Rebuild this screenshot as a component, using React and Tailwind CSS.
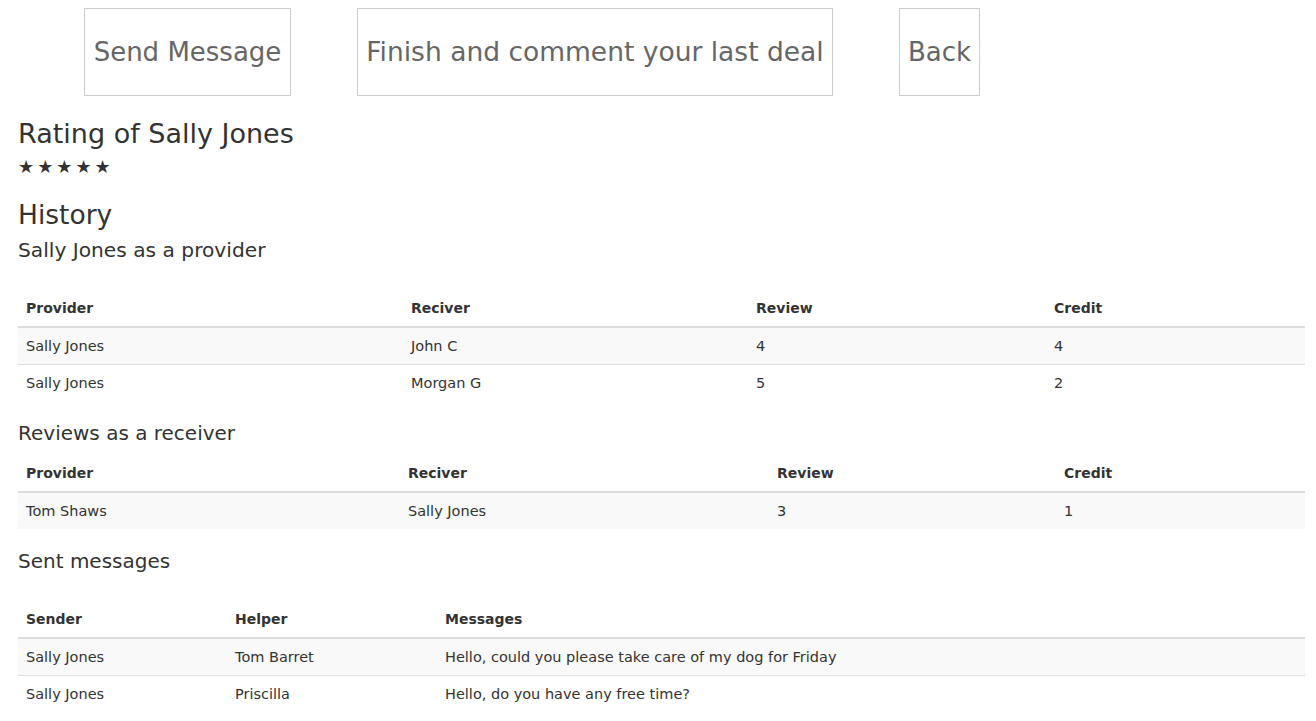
const providerRows = [
  ["Sally Jones", "John C", "4", "4"],
  ["Sally Jones", "Morgan G", "5", "2"],
];

const receiverRows = [["Tom Shaws", "Sally Jones", "3", "1"]];

const messageRows = [
  ["Sally Jones", "Tom Barret", "Hello, could you please take care of my dog for Friday"],
  ["Sally Jones", "Priscilla", "Hello, do you have any free time?"],
];

// bootstrap-ish striped table
const DataTable = ({ heads, widths, rows }) => (
  <table className="w-full table-fixed border-collapse leading-[20px] text-[#333]">
    <thead>
      <tr>
        {heads.map((h, i) => (
          <th
            key={h}
            className={`${widths[i] || ""} h-[37px] border-b-2 border-[#ddd] px-[8px] py-0 text-left text-[14px] font-bold`}
          >
            {h}
          </th>
        ))}
      </tr>
    </thead>
    <tbody>
      {rows.map((row, r) => (
        <tr
          key={r}
          className={`${r % 2 === 0 ? "bg-[#f9f9f9]" : ""} ${r > 0 ? "border-t border-[#ddd]" : ""}`}
        >
          {row.map((cell, c) => (
            <td key={c} className="h-[37px] px-[8px] py-0 text-[14.5px]">
              {cell}
            </td>
          ))}
        </tr>
      ))}
    </tbody>
  </table>
);

export default function App() {
  return (
    <div
      className="min-h-screen bg-white text-[#333]"
      style={{ fontFamily: '"DejaVu Sans", Verdana, sans-serif' }}
    >
      {/* action buttons */}
      <div className="flex gap-[66px] pl-[84px] pt-[8px]">
        <button className="flex h-[88px] w-[207px] items-center justify-center border border-[#ccc] bg-white text-[26px] text-[#666]">
          Send Message
        </button>
        <button className="flex h-[88px] w-[476px] items-center justify-center border border-[#ccc] bg-white text-[26.5px] text-[#666]">
          Finish and comment your last deal
        </button>
        <button className="flex h-[88px] w-[81px] items-center justify-center border border-[#ccc] bg-white text-[26px] text-[#666]">
          Back
        </button>
      </div>

      <div className="pl-[18px] pr-[11px]">
        <h3 className="mt-[21px] text-[27px] leading-[34px] font-normal">Rating of Sally Jones</h3>
        <div className="mt-[6px] text-[18px] leading-[20px] tracking-[3px] text-[#333]">★★★★★</div>

        <h3 className="mt-[21px] text-[26.5px] leading-[34px] font-normal">History</h3>
        <h4 className="mt-[5px] text-[20.2px] leading-[26px] font-normal">Sally Jones as a provider</h4>

        <div className="mt-[27px]">
          <DataTable
            heads={["Provider", "Reciver", "Review", "Credit"]}
            widths={["w-[385px]", "w-[345px]", "w-[298px]"]}
            rows={providerRows}
          />
        </div>

        <h4 className="mt-[19px] text-[20px] leading-[26px] font-normal">Reviews as a receiver</h4>
        <div className="mt-[9px]">
          <DataTable
            heads={["Provider", "Reciver", "Review", "Credit"]}
            widths={["w-[382px]", "w-[369px]", "w-[287px]"]}
            rows={receiverRows}
          />
        </div>

        <h4 className="mt-[19px] text-[20px] leading-[26px] font-normal">Sent messages</h4>
        <div className="mt-[27px]">
          <DataTable
            heads={["Sender", "Helper", "Messages"]}
            widths={["w-[209px]", "w-[210px]"]}
            rows={messageRows}
          />
        </div>
      </div>
    </div>
  );
}
